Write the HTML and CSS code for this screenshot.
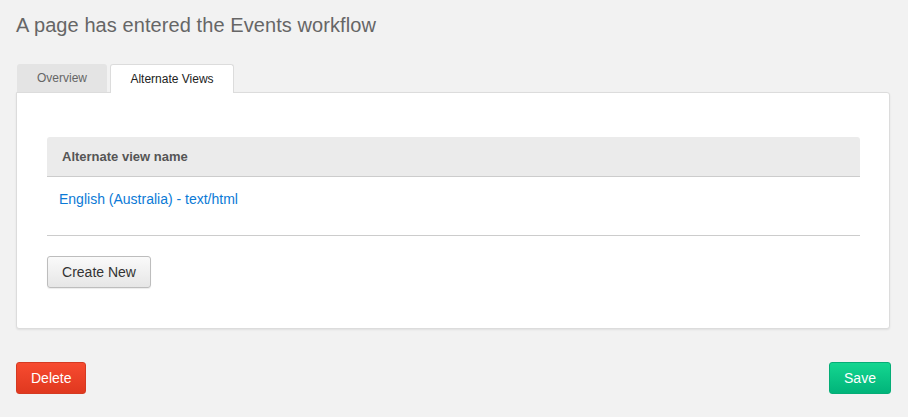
FILE: index.html
```html
<!DOCTYPE html>
<html lang="en">
<head>
<meta charset="utf-8">
<title>Events workflow</title>
<link rel="stylesheet" href="styles.css">
</head>
<body>
  <h1 class="page-title">A page has entered the Events workflow</h1>
  <div class="tabs">
    <div class="tab">Overview</div>
    <div class="tab tab-active">Alternate Views</div>
  </div>
  <div class="panel">
    <div class="table">
      <div class="table-head">Alternate view name</div>
      <div class="table-row"><a class="row-link" href="#">English (Australia) - text/html</a></div>
    </div>
    <button class="btn btn-default" type="button">Create New</button>
  </div>
  <div class="actions">
    <button class="btn btn-danger" type="button">Delete</button>
    <button class="btn btn-success" type="button">Save</button>
  </div>
</body>
</html>
```
FILE: styles.css
```css
html, body {
  margin: 0;
  padding: 0;
}
body {
  background: #f2f2f2;
  font-family: "Liberation Sans", Arial, Helvetica, sans-serif;
  padding: 12px 17px 0 16px;
  color: #333;
}
.page-title {
  margin: 0;
  font-size: 20px;
  font-weight: normal;
  line-height: 26px;
  letter-spacing: 0.08px;
  color: #666;
}
.tabs {
  display: flex;
  gap: 3px;
  margin-top: 26px;
  padding-left: 1px;
  align-items: flex-end;
}
.tab {
  width: 90px;
  height: 28px;
  line-height: 28px;
  text-align: center;
  font-size: 12px;
  color: #666;
  background: #e4e4e4;
  border-radius: 3px 3px 0 0;
}
.tab-active {
  width: 122px;
  height: 28px;
  background: #fff;
  color: #222;
  border: 1px solid #dcdcdc;
  border-bottom: none;
  margin-bottom: -1px;
  position: relative;
  z-index: 1;
}
.panel {
  background: #fff;
  border: 1px solid #dcdcdc;
  border-radius: 0 3px 3px 3px;
  box-shadow: 0 1px 2px rgba(0, 0, 0, 0.08);
  padding: 44px 29px 40px 30px;
  margin-right: 1px;
}
.table-head {
  background: #ebebeb;
  border-radius: 3px 3px 0 0;
  border-bottom: 1px solid #cccccc;
  height: 39px;
  line-height: 40px;
  padding-left: 15px;
  font-size: 13px;
  font-weight: bold;
  color: #555;
}
.table-row {
  border-bottom: 1px solid #cccccc;
  padding: 14px 12px 28px;
  line-height: 16px;
  height: 16px;
}
.row-link {
  font-size: 14px;
  color: #0b7ad6;
  text-decoration: none;
}
.btn {
  font-family: "Liberation Sans", Arial, Helvetica, sans-serif;
  font-size: 14px;
  height: 32px;
  border-radius: 3px;
  cursor: pointer;
  padding: 0 14px;
}
.panel .btn-default {
  margin-top: 20px;
  width: 104px;
  color: #333;
  background: linear-gradient(#fafafa, #e6e6e6);
  border: 1px solid #bdbdbd;
  box-shadow: 0 1px 1px rgba(0, 0, 0, 0.08);
}
.actions {
  display: flex;
  justify-content: space-between;
  margin-top: 33px;
}
.btn-danger {
  width: 70px;
  color: #fff;
  background: linear-gradient(#f74b30, #e0381f);
  border: 1px solid #d53a22;
}
.btn-success {
  width: 62px;
  color: #fff;
  background: linear-gradient(#14d690, #01b47a);
  border: 1px solid #05ad76;
}
```
